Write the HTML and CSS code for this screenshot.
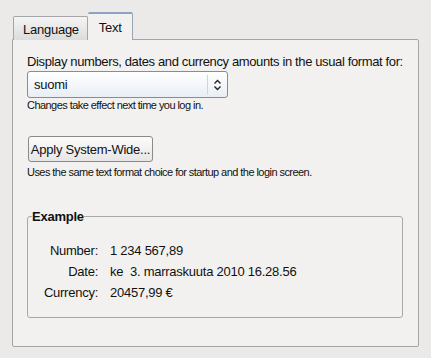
FILE: index.html
```html
<!DOCTYPE html>
<html lang="fi">
<head>
<meta charset="UTF-8">
<title>Formats</title>
<link rel="stylesheet" href="styles.css">
</head>
<body>
<div class="dialog">
    <div class="tabs">
        <div class="tab">Language</div>
        <div class="tab active">Text</div>
    </div>
    <div class="pane">
        <div class="label">Display numbers, dates and currency amounts in the usual format for:</div>
        <div class="combo">
            <span class="combo-text">suomi</span>
            <span class="combo-arrow">
                <svg width="9" height="12" viewBox="0 0 9 12"><path d="M1.5 4.5 L4.5 1.5 L7.5 4.5 M1.5 7.5 L4.5 10.5 L7.5 7.5" fill="none" stroke="#222" stroke-width="1.4"/></svg>
            </span>
        </div>
        <div class="hint">Changes take effect next time you log in.</div>

        <button class="btn">Apply System-Wide...</button>
        <div class="hint">Uses the same text format choice for startup and the login screen.</div>

        <fieldset class="group">
            <legend>Example</legend>
            <div class="rows">
                <span class="key">Number:</span><span>1 234 567,89</span>
                <span class="key">Date:</span><span>ke&nbsp; 3. marraskuuta 2010 16.28.56</span>
                <span class="key">Currency:</span><span>20457,99 €</span>
            </div>
        </fieldset>
    </div>
</div>
</body>
</html>
```

FILE: styles.css
```css
body {
    margin: 0;
    background-color: #ebeae8;
    font-family: "Liberation Sans", Arial, sans-serif;
    font-size: 13px;
    letter-spacing: -0.25px;
    color: #111;
}
.dialog {
    padding: 12px 12px 0 12px;
    width: 407px;
}
.tabs {
    display: flex;
    align-items: flex-end;
    padding-left: 1px;
    height: 27px;
}
.tab {
    height: 23px;
    line-height: 25px;
    padding: 0 8px 0 9px;
    border: 1px solid #a5a5a5;
    border-bottom: none;
    border-radius: 2px 2px 0 0;
    background: linear-gradient(#f4f4f4, #dcdcdc);
    margin-bottom: -1px;
}
.tab.active {
    height: 26px;
    line-height: 27px;
    padding: 0 10px 0 11px;
    background: #f2f1ef;
    border-color: #9aa6b4;
    border-top: 2px solid #8ea3c2;
    border-left: none;
    position: relative;
    z-index: 1;
}
.pane {
    height: 306px;
    border: 1px solid #a5a5a5;
    border-radius: 0 2px 2px 2px;
    background: #f2f1ef;
    padding: 0 14px;
}
.label {
    margin-top: 14px;
    white-space: nowrap;
    letter-spacing: -0.37px;
}
.combo {
    margin-top: 2px;
    width: 199px;
    height: 25px;
    border: 1px solid #7d8ea6;
    border-radius: 3px;
    background: linear-gradient(#ffffff, #e9eef5);
    display: flex;
    align-items: center;
    justify-content: space-between;
}
.combo-text {
    padding-left: 6px;
}
.combo-arrow {
    width: 19px;
    height: 19px;
    border-left: 1px solid #d0d4da;
    display: flex;
    align-items: center;
    justify-content: center;
}
.hint {
    font-size: 11px;
    letter-spacing: -0.55px;
    margin-top: 1px;
    white-space: nowrap;
}
.btn {
    margin-top: 25px;
    margin-left: 1px;
    height: 26px;
    width: 125px;
    padding: 0;
    border: 1px solid #8a8a8a;
    border-radius: 3px;
    background: linear-gradient(#fbfbfb, #e6e6e6);
    font-family: inherit;
    font-size: 13px;
    letter-spacing: -0.25px;
    white-space: nowrap;
    color: #111;
}
.hint + .btn + .hint {
    margin-top: 4px;
}
.group {
    margin: 31px 0 0 0;
    width: 376px;
    height: 109px;
    box-sizing: border-box;
    border: 1px solid #a8a8a8;
    border-radius: 3px;
    padding: 0;
}
.group legend {
    font-weight: bold;
    padding: 0;
    margin-left: 4px;
}
.rows {
    display: grid;
    grid-template-columns: 70px auto;
    column-gap: 12px;
    row-gap: 6px;
    padding-top: 19px;
    line-height: 15px;
}
.key {
    text-align: right;
}
```
